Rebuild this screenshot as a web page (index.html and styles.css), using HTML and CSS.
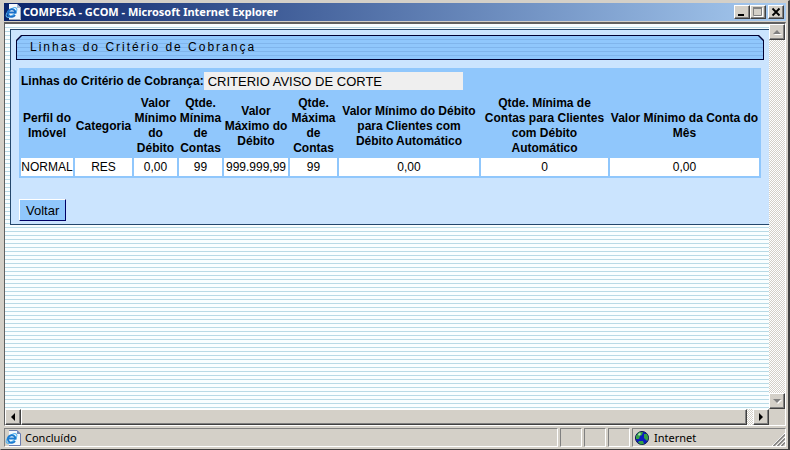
FILE: index.html
```html
<!DOCTYPE html>
<html lang="pt-BR">
<head>
<meta charset="utf-8">
<title>COMPESA - GCOM</title>
<link rel="stylesheet" href="styles.css">
</head>
<body>
<div class="window">
  <header class="titlebar">
    <svg class="page-icon" viewBox="0 0 16 16" aria-hidden="true">
      <path d="M4 0h8l4 4v12H4z" fill="#f4f7fb"/>
      <path d="M12 0v4h4z" fill="#a9b9d0"/>
      <path d="M15.500 4v11.500H4" fill="none" stroke="#a0a8b8"/>
      <ellipse cx="6.500" cy="8.500" rx="6.500" ry="3" transform="rotate(-40 6.500 8.500)" fill="none" stroke="#55b4f0" stroke-width="1.200"/>
      <path d="M10 11A3.800 3.800 0 1 1 10.500 8.500H4" fill="none" stroke="#1b6fc8" stroke-width="2"/>
    </svg>
    <span class="window-title">COMPESA - GCOM - Microsoft Internet Explorer</span>
    <div class="window-buttons">
      <button type="button" class="bevel" aria-label="Minimizar"><svg viewBox="0 0 12 10"><path d="M2 7h6v2H2z"/></svg></button>
      <button type="button" class="bevel" aria-label="Maximizar" disabled><svg viewBox="0 0 12 10"><path d="M2 1h9v9H2z" fill="#fff"/><path d="M1.500 .5h8v8h-8z" fill="#d4d0c8" stroke="#808080"/><path d="M1 0h9v2H1z" fill="#808080"/></svg></button>
      <button type="button" class="bevel close" aria-label="Fechar"><svg viewBox="0 0 12 10"><path d="M2.500 1.500l7 7M9.500 1.500l-7 7" stroke="#000" stroke-width="1.800"/></svg></button>
    </div>
  </header>

  <div class="client">
    <main class="page">
      <section class="panel">
        <div class="tab"><h1>Linhas do Critério de Cobrança</h1></div>
        <div class="criteria">
          <div class="field">
            <label for="criterio">Linhas do Critério de Cobrança:</label>
            <input id="criterio" type="text" value="CRITERIO AVISO DE CORTE" readonly>
          </div>
          <table>
            <colgroup>
              <col class="c-perfil"><col class="c-categoria"><col class="c-min"><col class="c-min"><col class="c-max"><col class="c-qmax"><col class="c-vauto"><col class="c-qauto"><col class="c-conta">
            </colgroup>
            <thead>
              <tr>
                <th scope="col">Perfil do Imóvel</th>
                <th scope="col">Categoria</th>
                <th scope="col">Valor Mínimo do Débito</th>
                <th scope="col">Qtde. Mínima de Contas</th>
                <th scope="col">Valor Máximo do Débito</th>
                <th scope="col">Qtde. Máxima de Contas</th>
                <th scope="col">Valor Mínimo do Débito para Clientes com Débito Automático</th>
                <th scope="col">Qtde. Mínima de Contas para Clientes com Débito Automático</th>
                <th scope="col">Valor Mínimo da Conta do Mês</th>
              </tr>
            </thead>
            <tbody>
              <tr><td>NORMAL</td><td>RES</td><td>0,00</td><td>99</td><td>999.999,99</td><td>99</td><td>0,00</td><td>0</td><td>0,00</td></tr>
            </tbody>
          </table>
        </div>
        <button type="button" class="back">Voltar</button>
      </section>
    </main>
    <div class="scroll vertical">
      <button type="button" class="bevel" aria-label="Rolar para cima" disabled><svg viewBox="0 0 10 10"><path d="M2 8l4-4 4 4z" fill="#fff"/><path d="M1 7l4-4 4 4z" fill="#808080"/></svg></button>
      <button type="button" class="bevel" aria-label="Rolar para baixo" disabled><svg viewBox="0 0 10 10"><path d="M2 4h8L6 8z" fill="#fff"/><path d="M1 3h8L5 7z" fill="#808080"/></svg></button>
    </div>
    <div class="scroll horizontal">
      <button type="button" class="bevel" aria-label="Rolar para a esquerda"><svg viewBox="0 0 10 10"><path d="M7 1v8L3 5z"/></svg></button>
      <div class="thumb bevel"></div>
      <button type="button" class="bevel" aria-label="Rolar para a direita"><svg viewBox="0 0 10 10"><path d="M3 1v8l4-4z"/></svg></button>
    </div>
    <div class="corner"></div>
  </div>

  <footer class="status">
    <div class="cell message">
      <svg class="page-icon" viewBox="0 0 16 16" aria-hidden="true">
        <path d="M4 0h8l4 4v12H4z" fill="#f4f7fb"/>
        <path d="M12 0v4h4z" fill="#7488b8"/>
        <path d="M4 .5h8l3.500 3.500v11.500H4" fill="none" stroke="#6b7db0"/>
        <ellipse cx="6.500" cy="8.500" rx="6.500" ry="3" transform="rotate(-40 6.500 8.500)" fill="none" stroke="#55b4f0" stroke-width="1.200"/>
        <path d="M10 11A3.800 3.800 0 1 1 10.500 8.500H4" fill="none" stroke="#1b7bd0" stroke-width="2"/>
      </svg>
      <span>Concluído</span>
    </div>
    <div class="cell small"></div>
    <div class="cell small"></div>
    <div class="cell small"></div>
    <div class="cell zone">
      <svg class="globe" viewBox="0 0 14 14" aria-hidden="true">
        <circle cx="7" cy="7" r="6.500" fill="#0a1cc0" stroke="#06104a"/>
        <path d="M1 5l3-4 4 0-1 3-2 1-1 3-3 0zM9 3l3 0 1.500 4-1.500 3-3-3zM4 10l4 0 1 3-3 .5-3-2z" fill="#35a045"/>
        <path d="M3 3l2-1 1 1-2 2z" fill="#b8e8c0"/>
      </svg>
      <span>Internet</span>
      <svg class="grip" viewBox="0 0 13 13" aria-hidden="true"><path d="M0 13L13 0M4 13l9-9M8 13l5-5" stroke="#fff"/><path d="M1.500 13L13 1.500M5.500 13L13 5.500M9.500 13L13 9.500" stroke="#808080" stroke-width="1.500"/></svg>
    </div>
  </footer>
</div>
</body>
</html>
```
FILE: styles.css
```css
* { box-sizing: border-box; }

body {
  margin: 0;
  font-family: "Liberation Sans", Arial, sans-serif;
  font-size: 12px;
  color: #000;
}

button {
  padding: 0;
  font: inherit;
  color: inherit;
}

.window {
  display: flex;
  flex-direction: column;
  height: 100vh;
  padding: 2px 2px 1px 3px;
  background: #d4d0c8;
  border: 1px solid #d4d0c8;
  border-right: 2px solid #404040;
  border-bottom-color: #404040;
}

.bevel {
  background: #d4d0c8;
  border: 1px solid;
  border-color: #fff #404040 #404040 #fff;
  box-shadow: inset -1px -1px #808080;
}

/* Title bar */
.titlebar {
  display: flex;
  align-items: center;
  flex: none;
  height: 18px;
  padding: 0 2px 0 1px;
  background: linear-gradient(90deg, #0a246a, #a6caf0);
  color: #fff;
}

.page-icon {
  flex: none;
  width: 16px;
  height: 16px;
}

.window-title {
  flex: 1;
  padding-left: 2px;
  font-family: "Noto Sans", Tahoma, sans-serif;
  font-size: 11px;
  font-weight: bold;
  line-height: 18px;
}

.window-buttons { display: flex; }

.window-buttons button {
  width: 16px;
  height: 14px;
}

.window-buttons .close { margin-left: 2px; }

.window-buttons svg {
  display: block;
  width: 12px;
  height: 10px;
  margin: auto;
}

/* Viewport and scroll bars */
.client {
  display: grid;
  flex: 1;
  min-height: 0;
  grid-template-columns: minmax(0, 1fr) 16px;
  grid-template-rows: minmax(0, 1fr) 16px;
  margin-top: 1px;
  border: 1px solid;
  border-color: #606060 #fff #fff #606060;
  border-top-width: 2px;
}

.page {
  overflow: hidden;
  padding: 5px 0 0 5px;
  background: repeating-linear-gradient(#f9feff 0 3px, #b9dae6 3px 4px);
}

.scroll {
  display: flex;
  justify-content: space-between;
  background: repeating-conic-gradient(#fff 0 25%, #d4d0c8 0 50%) 0 0 / 2px 2px;
}

.vertical { flex-direction: column; }

.scroll button {
  flex: none;
  width: 16px;
  height: 16px;
}

.scroll svg {
  display: block;
  width: 10px;
  height: 10px;
  margin: auto;
}

.thumb {
  flex: 1;
  margin-right: 6px;
}

.corner { background: #d4d0c8; }

/* Page content */
.panel {
  padding: 5px 5px 3px;
  background: #cbe4fe;
  border: 1px solid #24476c;
  border-right: 0;
}

.tab {
  padding: 1px;
  background: #000033;
  clip-path: polygon(5px 0, calc(100% - 5px) 0, 100% 5px, 100% 100%, 0 100%, 0 5px);
}

.tab h1 {
  margin: 0;
  padding-left: 13px;
  background: repeating-linear-gradient(#90c7fc 0 3px, #80b5ec 3px 4px);
  clip-path: polygon(5px 0, calc(100% - 5px) 0, 100% 5px, 100% 100%, 0 100%, 0 5px);
  font-size: 12px;
  font-weight: normal;
  letter-spacing: 2px;
  line-height: 23px;
}

.criteria {
  margin: 8px 3px 21px;
  background: #90c7fc;
}

.field {
  display: flex;
  align-items: center;
  padding: 4px 2px;
  font-weight: bold;
}

.field input {
  width: 259px;
  height: 18px;
  padding: 0 4px;
  border: 0;
  background: #efefef;
  font: 13px "Liberation Sans", Arial, sans-serif;
  color: #000;
}

table {
  width: 100%;
  table-layout: fixed;
  border-spacing: 2px;
}

th, td {
  padding: 0;
  text-align: center;
}

th {
  line-height: 15px;
}

td {
  background: #fff;
  line-height: 18px;
}

.c-perfil { width: 52px; }
.c-categoria { width: 57px; }
.c-min { width: 43px; }
.c-max { width: 64px; }
.c-qmax { width: 47px; }
.c-vauto { width: 140px; }
.c-qauto { width: 127px; }
.c-conta { width: 149px; }

.back {
  display: block;
  height: 22px;
  margin-left: 3px;
  padding: 0 6px;
  background: #90c7fc;
  border: 1px solid;
  border-color: #fff #000066 #000066 #fff;
  font-size: 13px;
}

/* Status bar */
.status {
  display: flex;
  flex: none;
  gap: 2px;
  height: 22px;
  padding: 2px 0 1px;
  font-family: "Noto Sans", Tahoma, sans-serif;
  font-size: 11px;
}

.cell {
  display: flex;
  align-items: center;
  border: 1px solid;
  border-color: #808080 #fff #fff #808080;
}

.message {
  flex: 1;
  gap: 4px;
}

.small { width: 22px; }

.zone {
  width: 154px;
  padding-left: 2px;
  gap: 5px;
}

.globe {
  width: 14px;
  height: 14px;
}

.grip {
  align-self: flex-end;
  width: 13px;
  height: 13px;
  margin-left: auto;
}
```
